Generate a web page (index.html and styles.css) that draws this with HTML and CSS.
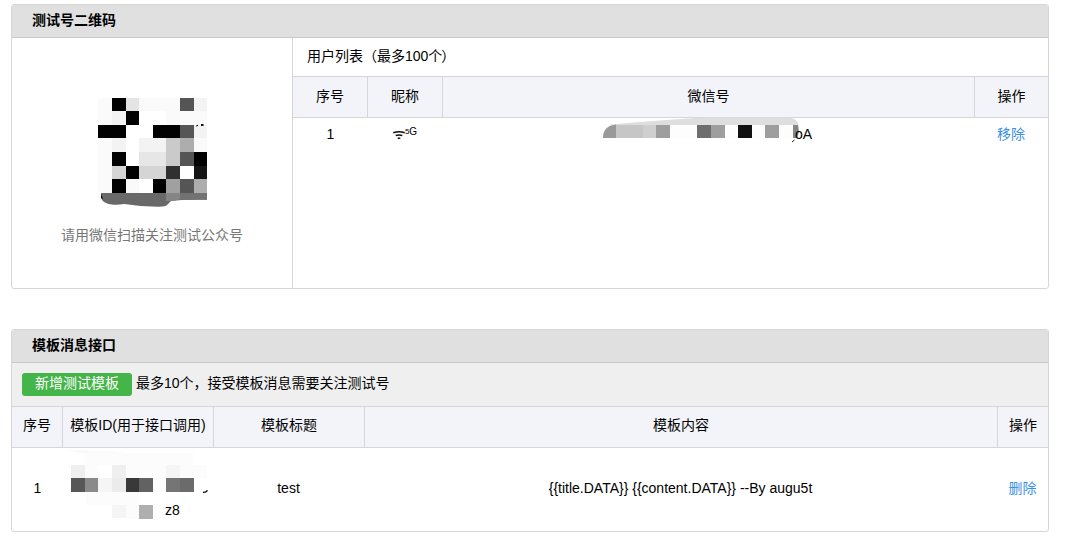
FILE: index.html
```html
<!DOCTYPE html>
<html lang="zh-CN">
<head>
<meta charset="utf-8">
<title>测试号管理</title>
<link rel="stylesheet" href="styles.css">
</head>
<body>
<section class="panel">
  <h2 class="panel-title">测试号二维码</h2>
  <div class="panel-body">
    <div class="qr">
      <svg class="qr-code" width="110" height="110" viewBox="98 98 110 110" shape-rendering="crispEdges">
        <path fill="#fafafa" d="M98 98h109v95H98z"/>
        <path fill="#fff" d="M126 111h40v14h-40zM126 125h27v13h-27zM126 138h13v28h-13zM139 179h14v14h-14zM180 166h14v13h-14z"/>
        <path fill="#e4e4e4" d="M126 98h13v13h-13zM153 152h13v14h-13z"/>
        <path fill="#f3f3f3" d="M112 111h14v14h-14zM112 138h14v14h-14zM139 138h27v14h-27zM194 98h13v13h-13zM194 125h13v13h-13z"/>
        <path fill="#e6e6e6" d="M139 152h27v14h-27z"/>
        <path fill="#d5d5d5" d="M112 166h14v13h-14zM139 166h27v13h-27z"/>
        <path fill="#cacaca" d="M166 138h14v28h-14z"/>
        <path fill="#adadad" d="M180 138h14v14h-14zM194 179h13v14h-13z"/>
        <path fill="#a0a0a0" d="M166 179h14v14h-14z"/>
        <path fill="#555" d="M180 98h14v13h-14zM180 125h14v13h-14zM180 152h14v14h-14zM180 179h14v14h-14z"/>
        <path fill="#303030" d="M166 166h14v13h-14z"/>
        <path fill="#151515" d="M194 166h13v13h-13z"/>
        <path fill="#020202" d="M112 98h14v13h-14zM126 111h13v14h-13zM98 125h28v13H98zM153 125h27v13h-27zM112 152h14v14h-14zM194 152h13v14h-13zM126 166h13v13h-13zM112 179h14v14h-14zM153 179h13v14h-13z"/>
        <g shape-rendering="auto">
          <path fill="#696969" d="M101 193h106v6.700q-15-.6-36 1.300l-4 4q-2 1.800-8 1.700-18 .1-35-2.700c-8 1.500-18 1-22-4z"/>
          <path fill="#858585" d="M166 193h14v6.500l-9 1.500h-5z"/>
          <path fill="#727272" d="M180 193h27v6.700l-27 .2z"/>
          <path fill="#111" d="M101 193l2 6-2-.5zM195.500 126.500l2.500-.5v-1.300l-1.500.5zM201 124h2.500v2H201z"/>
        </g>
      </svg>
      <p class="qr-tip">请用微信扫描关注测试公众号</p>
    </div>
    <div class="users">
      <h3 class="users-title">用户列表（最多100个<span class="close">）</span></h3>
      <div class="row user-cols head">
        <span>序号</span><span>昵称</span><span>微信号</span><span>操作</span>
      </div>
      <div class="row user-cols user">
        <span>1</span>
        <span class="nick"><svg width="12" height="8" viewBox="0 0 12 8" fill="none" stroke="#111" stroke-width="1.500"><path d="M.3 1.700Q6-.2 11.700 1.700M2.700 4.500Q6 3.300 9.300 4.500M4.700 7.200h2.600"/></svg><sup><i>5</i>G</sup></span>
        <span class="wechat"><svg class="mask" width="200" height="27" viewBox="602 116 200 27">
          <path fill="#dededf" d="M610 124.500Q650 121 703 117.500h87q7 1 9 8h-189z"/>
          <path fill="#999" d="M603 138q0-12 12-13.200h1V138z"/>
          <g shape-rendering="crispEdges">
          <path fill="#c6c6c6" d="M616 125h27v13h-27z"/><path fill="#cfcfcf" d="M643 125h13v13h-13z"/>
          <path fill="#9e9e9e" d="M656 125h14v13h-14zM711 125h14v13h-14zM765 125h14v13h-14z"/>
          <path fill="#fdfdfd" d="M670 125h27v13h-27zM725 125h13v13h-13zM752 125h13v13h-13zM779 125h14v13h-14z"/>
          <path fill="#6e6e6e" d="M697 125h14v13h-14z"/><path fill="#111" d="M738 125h14v13h-14z"/></g>
          <path fill="#858585" d="M793 125h5q2 7-1 13h-4z"/>
          <path stroke="#222" d="M792 142l2.500-2"/>
        </svg><b class="tail">oA</b></span>
        <a>移除</a>
      </div>
    </div>
  </div>
</section>

<section class="panel templates">
  <h2 class="panel-title">模板消息接口</h2>
  <div class="toolbar"><button class="add">新增测试模板</button><span class="note">最多10个，接受模板消息需要关注测试号</span></div>
  <div class="row tpl-cols head">
    <span>序号</span><span>模板ID(用于接口调用)</span><span>模板标题</span><span>模板内容</span><span>操作</span>
  </div>
  <div class="row tpl-cols tpl">
    <span>1</span>
    <span class="tpl-id"><svg class="id-mask" width="150" height="80" viewBox="62 448 150 80" shape-rendering="crispEdges">
      <path fill="#fafafa" d="M65 450l45 1 25 3H85zM98 452h13v13H98z"/>
      <path fill="#fcfcfc" d="M85 453h108v39H85zM193 465h14v13h-14zM86 492h53v13H86zM126 505h13v14h-13z"/>
      <path fill="#fff" d="M98 465h14v13H98z"/>
      <path fill="#efefef" d="M71 465h14v13H71zM112 465h14v13h-14z"/>
      <path fill="#f5f5f5" d="M98 478h14v14H98zM166 465h14v13h-14zM112 505h14v13h-14z"/>
      <path fill="#ebebeb" d="M112 478h14v14h-14z"/>
      <path fill="#575757" d="M71 478h14v14H71z"/><path fill="#8a8a8a" d="M85 478h13v14H85z"/>
      <path fill="#393939" d="M126 478h13v14h-13z"/><path fill="#626262" d="M139 478h14v14h-14z"/>
      <path fill="#757575" d="M166 478h14v14h-14z"/><path fill="#6b6b6b" d="M180 478h14v14h-14z"/>
      <path fill="#afafaf" d="M139 505h14v14h-14z"/>
      <path fill="none" stroke="#111" stroke-width="1.400" shape-rendering="auto" d="M203 492.300q3 .3 4.500-2"/>
    </svg><b class="id-tail">z8</b></span>
    <span>test</span><span>{{title.DATA}} {{content.DATA}} --By augu5t</span><a>删除</a>
  </div>
</section>
</body>
</html>
```
FILE: styles.css
```css
* { box-sizing: border-box; }
body {
  margin: 0;
  padding: 4px 0 0 11px;
  background: #fff;
  color: #000;
  font: 14px/20px "Liberation Sans", "Noto Sans CJK SC", sans-serif;
}
h2, h3, p { margin: 0; font-size: 14px; }
b, i { font-weight: normal; font-style: normal; }
.panel {
  width: 1038px;
  height: 285px;
  border: 1px solid #d6d6d6;
  border-radius: 3px;
  overflow: hidden;
}
.templates { height: 203px; margin-top: 40px; }
.panel-title {
  height: 33px;
  padding: 5px 20px;
  background: #e0e0e0;
  border-bottom: 1px solid #c9c9c9;
  font-weight: bold;
}
.panel-body { display: flex; height: 250px; }
.qr {
  width: 281px;
  border-right: 1px solid #d6d6d6;
  padding-top: 60px;
  text-align: center;
}
.qr-code { display: block; margin-left: 86px; }
.qr-tip { margin-top: 17px; color: #777; }
.users { flex: 1; }
.users-title {
  height: 39px;
  padding: 8px 14px;
  border-bottom: 1px solid #d6d6d6;
  font-weight: normal;
}
.close { margin-left: -1px; }
.row { display: grid; text-align: center; }
.user-cols { grid-template-columns: 74px 75px 532px 1fr; }
.tpl-cols { grid-template-columns: 50px 151px 151px 633px 1fr; }
.head {
  height: 41px;
  background: #f3f4f9;
  border-bottom: 1px solid #d6d6d6;
  line-height: 38px;
}
.tpl-cols.head { line-height: 37px; }
.head span + span { border-left: 1px solid #d6d6d6; }
.head span { white-space: nowrap; }
.user { height: 32px; line-height: 32px; }
.user > :first-child { padding-left: 1px; }
.nick { display: flex; justify-content: center; }
.nick svg { margin: 13px 0 0 1px; }
.nick sup { font-size: 10px; line-height: 28px; vertical-align: top; }
.nick i { font-size: 8px; vertical-align: 1px; }
.wechat { display: flex; padding-left: 160px; }
.mask { margin-top: -2px; flex: none; }
.tail { margin-left: -7px; }
a { color: #3b91e5; }
.toolbar {
  display: flex;
  align-items: flex-start;
  gap: 4px;
  height: 44px;
  padding: 10px 10px 0;
  background: #efefef;
  border-bottom: 1px solid #d6d6d6;
}
.note { line-height: 21px; }
.add {
  width: 110px;
  height: 23px;
  padding: 0 0 3px;
  border: 0;
  border-radius: 3px;
  background: #44b549;
  color: #fff;
  font: inherit;
}
.tpl { height: 84px; line-height: 81px; }
.tpl > :first-child { padding-left: 1px; }
.tpl-id { display: flex; }
.id-mask { flex: none; }
.id-tail { margin-left: -47px; padding-top: 22px; }
```
